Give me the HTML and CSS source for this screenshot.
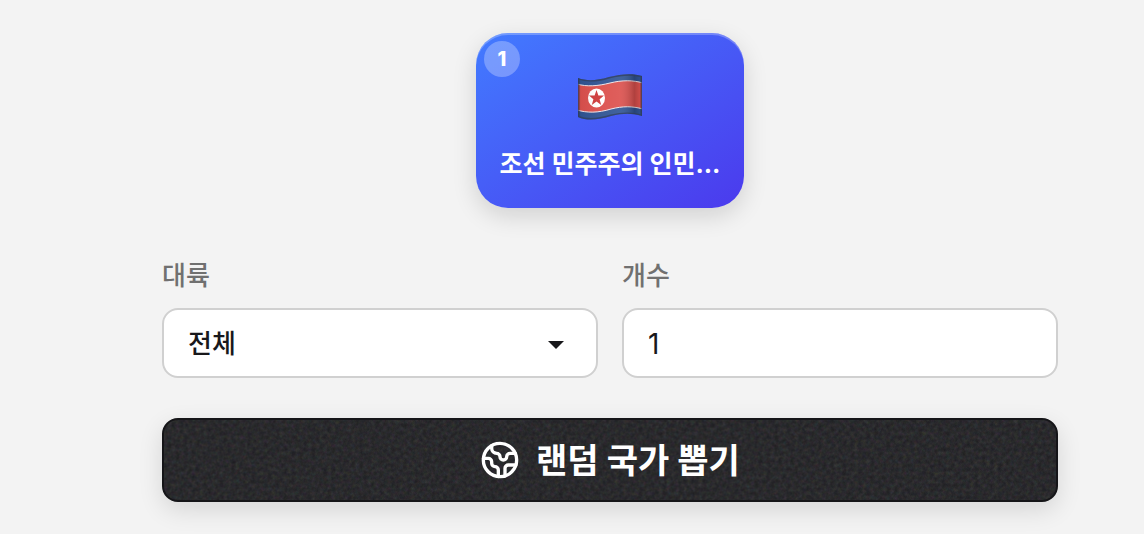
FILE: index.html
```
<!DOCTYPE html>
<html lang="ko">
<head>
  <meta charset="UTF-8">
  <meta name="viewport" content="width=device-width, initial-scale=1.0">
  <title>랜덤 국가 뽑기</title>
  <link rel="stylesheet" href="styles.css">
</head>
<body>
  <main class="picker">
    <!-- Result cards -->
    <section class="results">
      <article class="country-card">
        <span class="badge">1</span>
        <svg class="flag" viewBox="0 0 66 48" role="img" aria-label="북한 국기">
          <defs>
            <clipPath id="flagShape">
              <path d="M1 5C9 8 19 8 32 4C44 1 55 0 65 3V43C55 40 46 40 34 43C21 47 10 48 1 44Z"/>
            </clipPath>
            <linearGradient id="flagFold">
              <stop offset="0" stop-color="#000" stop-opacity=".24"/>
              <stop offset=".06" stop-color="#000" stop-opacity=".04"/>
              <stop offset=".35" stop-color="#fff" stop-opacity=".04"/>
              <stop offset=".65" stop-color="#fff" stop-opacity=".08"/>
              <stop offset=".87" stop-color="#000" stop-opacity=".2"/>
              <stop offset=".96" stop-color="#000" stop-opacity=".06"/>
              <stop offset="1" stop-color="#000" stop-opacity=".35"/>
            </linearGradient>
          </defs>
          <g clip-path="url(#flagShape)">
            <path fill="#315594" d="M0 0H66V48H0Z"/>
            <path fill="#dc514e" stroke="#eee6ea" d="M0 11C10 14 21 13 33 10C45 7 56 7 66 10V36C55 33 46 33 34 36C21 40 10 40 0 37Z"/>
            <ellipse cx="19.500" cy="25" rx="8.500" ry="9.500" fill="#fff"/>
            <path fill="#cf3d3d" d="M19.500 17L21.400 22.600L27 22.600L22.600 26.200L24.200 32L19.500 28.600L14.800 32L16.400 26.200L12 22.600L17.600 22.600Z"/>
            <path fill="url(#flagFold)" d="M0 0H66V48H0Z"/>
            <path fill="none" stroke="#333c55" stroke-opacity=".65" stroke-width="3" d="M1 5C9 8 19 8 32 4C44 1 55 0 65 3V43C55 40 46 40 34 43C21 47 10 48 1 44Z"/>
          </g>
        </svg>
        <h2 class="country-name">조선 민주주의 인민...</h2>
      </article>
    </section>

    <!-- Options -->
    <form class="options">
      <div class="field">
        <label for="continent">대륙</label>
        <div class="select-box">
          <select id="continent">
            <option>전체</option>
            <option>아시아</option>
            <option>유럽</option>
            <option>아프리카</option>
          </select>
        </div>
      </div>
      <div class="field">
        <label for="count">개수</label>
        <input id="count" type="text" inputmode="numeric" value="1">
      </div>

      <button class="draw-button" type="button">
        <svg class="noise" aria-hidden="true">
          <filter id="grain">
            <feTurbulence type="fractalNoise" baseFrequency="0.25" numOctaves="3" stitchTiles="stitch"/>
          </filter>
          <rect width="100%" height="100%" filter="url(#grain)"/>
        </svg>
        <svg class="icon" viewBox="0 0 24 24" aria-hidden="true">
          <path d="M21.54 15H17a2 2 0 0 0-2 2v4.54"/>
          <path d="M7 3.34V5a3 3 0 0 0 3 3a2 2 0 0 1 2 2c0 1.100.9 2 2 2a2 2 0 0 0 2-2c0-1.100.9-2 2-2h3.170"/>
          <path d="M11 21.950V18a2 2 0 0 0-2-2a2 2 0 0 1-2-2v-1a2 2 0 0 0-2-2H2.050"/>
          <circle cx="12" cy="12" r="10"/>
        </svg>
        <span>랜덤 국가 뽑기</span>
      </button>
    </form>
  </main>
</body>
</html>
```
FILE: styles.css
```
* {
  margin: 0;
  padding: 0;
  box-sizing: border-box;
}

body {
  background: #f3f3f3;
  color: #18181b;
  font-family: Inter, "Noto Sans CJK KR", sans-serif;
}

.picker {
  padding: 33px 86px 32px 162px;
}

/* Result cards */
.results {
  display: flex;
  flex-wrap: wrap;
  justify-content: center;
  gap: 24px;
  margin-bottom: 48px;
}

.country-card {
  position: relative;
  display: flex;
  flex-direction: column;
  align-items: center;
  gap: 24px;
  width: 268px;
  padding: 40px 24px 24px;
  border-radius: 32px;
  background: linear-gradient(to bottom right, #427bff, #4b3aed);
  box-shadow: inset 0 2px rgba(255, 255, 255, 0.25), 0 8px 24px rgba(0, 0, 0, 0.14);
  color: #fff;
}

.badge {
  position: absolute;
  top: 8px;
  left: 8px;
  width: 36px;
  height: 36px;
  border-radius: 50%;
  background: rgba(255, 255, 255, 0.28);
  font-size: 20px;
  font-weight: 800;
  line-height: 36px;
  text-align: center;
}

.flag {
  width: 66px;
  height: 48px;
}

.country-name {
  font-size: 25px;
  font-weight: 700;
  line-height: 39px;
  white-space: nowrap;
}

/* Options */
.options {
  display: grid;
  grid-template-columns: 1fr 1fr;
  column-gap: 24px;
  row-gap: 40px;
}

.field {
  display: flex;
  flex-direction: column;
  gap: 12px;
}

.field label {
  color: #707070;
  font-size: 26px;
  font-weight: 500;
  line-height: 40px;
}

.field select,
.field input {
  width: 100%;
  height: 70px;
  padding: 0 24px;
  border: 2px solid #d0d0d0;
  border-radius: 16px;
  background: #fff;
  color: #18181b;
  font-family: inherit;
  font-size: 28px;
  outline: none;
}

.field select {
  appearance: none;
  font-size: 26px;
  font-weight: 500;
}

.field input {
  padding-top: 2px;
}

.select-box {
  position: relative;
}

.select-box::after {
  content: "";
  position: absolute;
  top: 33px;
  right: 34px;
  border: 8px solid transparent;
  border-top-color: #18181b;
  border-bottom: 0;
  pointer-events: none;
}

.draw-button {
  position: relative;
  grid-column: 1 / -1;
  display: flex;
  align-items: center;
  justify-content: center;
  gap: 16px;
  height: 84px;
  border: 2px solid #151518;
  border-radius: 16px;
  background: #1d1d20;
  box-shadow: 0 8px 24px rgba(0, 0, 0, 0.12);
  color: #fff;
  font-family: inherit;
  font-size: 34px;
  font-weight: 700;
  cursor: pointer;
}

.noise {
  position: absolute;
  inset: 0;
  width: 100%;
  height: 100%;
  border-radius: 14px;
  opacity: 0.16;
}

.icon {
  position: relative;
  width: 40px;
  height: 40px;
  fill: none;
  stroke: currentColor;
  stroke-width: 2;
  stroke-linecap: round;
  stroke-linejoin: round;
}

.draw-button span {
  position: relative;
  padding-bottom: 4px;
}

@media (max-width: 768px) {
  .picker {
    padding: 32px 24px;
  }
}
```
